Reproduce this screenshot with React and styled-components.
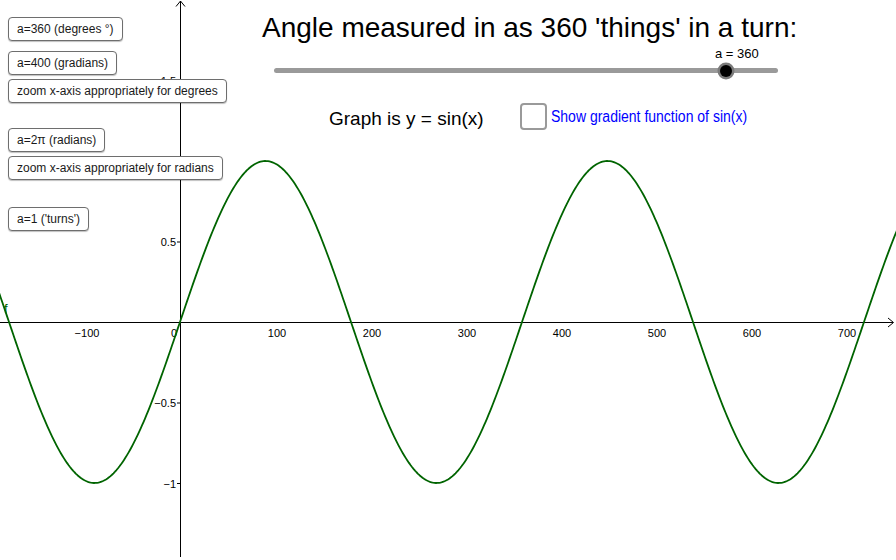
import React from "react";
import styled, { createGlobalStyle } from "styled-components";

const GlobalStyle = createGlobalStyle`
  html, body { margin: 0; padding: 0; background: #ffffff; }
  body { font-family: "Liberation Sans", Arial, sans-serif; }
`;

const Applet = styled.div`
  position: relative;
  width: 896px;
  height: 560px;
  overflow: hidden;
  background: #ffffff;
  font-family: "Liberation Sans", Arial, sans-serif;
  color: #000;
`;

const Graph = styled.svg`
  display: block;
  width: 896px;
  height: 560px;
`;

const AxisLabel = styled.text`
  font-family: "Liberation Sans", Arial, sans-serif;
  font-size: 11px;
  fill: #000;
`;

const CurveLabel = styled.text`
  font-family: "Liberation Sans", Arial, sans-serif;
  font-size: 13px;
  fill: #006400;
`;

/* widgets placed on the GeoGebra canvas */
const ButtonStack = styled.div`
  position: absolute;
  left: 8px;
  top: 17px;
  display: flex;
  flex-direction: column;
  align-items: flex-start;
  gap: 4px;
`;

const ToolButton = styled.button`
  height: 24px;
  padding: 0 8px;
  margin: ${(p) => p.$space || 0}px 0 0 0;
  border: 1px solid #6e6e6e;
  border-radius: 4px;
  background: #ffffff;
  box-shadow: 0 1px 1px rgba(0, 0, 0, 0.25);
  font-family: "Liberation Sans", Arial, sans-serif;
  font-size: 12px;
  line-height: 22px;
  color: #1a1a1a;
  white-space: nowrap;
  cursor: pointer;
`;

const ControlPanel = styled.div`
  position: absolute;
  left: 262px;
  top: 14px;
  display: flex;
  flex-direction: column;
  align-items: flex-start;
`;

const Title = styled.div`
  font-size: 28px;
  line-height: 28px;
  white-space: nowrap;
`;

const SliderTrack = styled.div`
  position: relative;
  margin: 26px 0 0 12px;
  width: 504px;
  height: 5px;
  border-radius: 3px;
  background: #9a9a9a;
`;

const SliderKnob = styled.div`
  position: absolute;
  left: ${(p) => p.$pos}px;
  top: 50%;
  width: 12px;
  height: 12px;
  margin: -6px 0 0 -6px;
  border-radius: 50%;
  background: #000;
  box-shadow: 0 0 0 2.5px #7a7a7a;
`;

const SliderValue = styled.div`
  position: absolute;
  left: ${(p) => p.$pos - 11}px;
  bottom: 13px;
  font-size: 13px;
  line-height: 13px;
  white-space: nowrap;
`;

const OptionsRow = styled.div`
  display: flex;
  align-items: center;
  gap: 36px;
  margin: 30px 0 0 67px;
`;

const GraphText = styled.div`
  font-size: 19px;
  line-height: 19px;
  padding-top: 3px;
  white-space: nowrap;
`;

const CheckRow = styled.label`
  display: flex;
  align-items: center;
  gap: 4px;
  cursor: pointer;
`;

const CheckBox = styled.span`
  display: block;
  box-sizing: border-box;
  width: 27px;
  height: 27px;
  border: 2px solid #9a9a9a;
  border-radius: 4px;
  background: #fff;
`;

const CheckText = styled.span`
  display: block;
  font-size: 16px;
  line-height: 16px;
  color: #0000ff;
  white-space: nowrap;
  transform: scaleX(0.875);
  transform-origin: left center;
`;

const OX = 180;
const OY = 322;
const SX = 0.95;
const SY = 161;

function sinePath() {
  const pts = [];
  for (let px = -2; px <= 898; px += 1.5) {
    const xv = (px - OX) / SX;
    const y = OY - SY * Math.sin((xv * Math.PI) / 180);
    pts.push(`${px.toFixed(1)},${y.toFixed(2)}`);
  }
  return "M" + pts.join(" L");
}

const xTicks = [-100, 100, 200, 300, 400, 500, 600, 700];
const yTicks = [
  { v: 1.5, t: "1.5" },
  { v: 1, t: "" },
  { v: 0.5, t: "0.5" },
  { v: -0.5, t: "\u22120.5" },
  { v: -1, t: "\u22121" },
];

const buttons = [
  { label: "a=360 (degrees °)", space: 0 },
  { label: "a=400 (gradians)", space: 6 },
  { label: "zoom x-axis appropriately for degrees", space: 0 },
  { label: "a=2\u03c0 (radians)", space: 21 },
  { label: "zoom x-axis appropriately for radians", space: 0 },
  { label: "a=1 ('turns')", space: 23 },
];

const KNOB = 452;

export default function App() {
  return (
    <>
      <GlobalStyle />
      <Applet>
        <Graph viewBox="0 0 896 560" xmlns="http://www.w3.org/2000/svg">
          <line x1="0" y1={OY + 0.5} x2="893" y2={OY + 0.5} stroke="#000" strokeWidth="1" />
          <polyline points={`888,${OY - 4} 893.5,${OY + 0.5} 888,${OY + 5}`} fill="none" stroke="#000" strokeWidth="1" />
          <line x1={OX + 0.5} y1="1" x2={OX + 0.5} y2="557" stroke="#000" strokeWidth="1" />
          <polyline points={`${OX - 4},6.5 ${OX + 0.5},1 ${OX + 5},6.5`} fill="none" stroke="#000" strokeWidth="1" />

          {yTicks.map((t) => {
            const y = OY - SY * t.v;
            return (
              <g key={t.v}>
                <line x1={OX - 3} y1={y + 0.5} x2={OX} y2={y + 0.5} stroke="#000" strokeWidth="1" />
                {t.t && (
                  <AxisLabel x={OX - 4} y={y + 4.5} textAnchor="end">
                    {t.t}
                  </AxisLabel>
                )}
              </g>
            );
          })}

          {xTicks.map((v) => (
            <AxisLabel key={v} x={OX + SX * v + 2} y={OY + 15} textAnchor="middle">
              {v < 0 ? `\u2212${-v}` : v}
            </AxisLabel>
          ))}
          <AxisLabel x={OX - 9} y={OY + 15}>0</AxisLabel>

          <path d={sinePath()} fill="none" stroke="#006400" strokeWidth="1.8" strokeLinejoin="round" />
          <CurveLabel x="4" y="313">f</CurveLabel>
        </Graph>

        <ButtonStack>
          {buttons.map((b) => (
            <ToolButton key={b.label} $space={b.space} type="button">
              {b.label}
            </ToolButton>
          ))}
        </ButtonStack>

        <ControlPanel>
          <Title>Angle measured in as 360 'things' in a turn:</Title>
          <SliderTrack>
            <SliderValue $pos={KNOB}>a = 360</SliderValue>
            <SliderKnob $pos={KNOB} />
          </SliderTrack>
          <OptionsRow>
            <GraphText>Graph is y = sin(x)</GraphText>
            <CheckRow>
              <CheckBox />
              <CheckText>Show gradient function of sin(x)</CheckText>
            </CheckRow>
          </OptionsRow>
        </ControlPanel>
      </Applet>
    </>
  );
}
